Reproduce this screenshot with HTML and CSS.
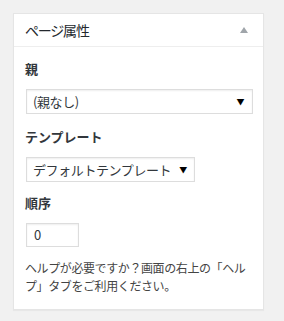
FILE: index.html
```html
<!DOCTYPE html>
<html lang="ja">
<head>
  <meta charset="UTF-8" />
  <title>ページ属性</title>
  <link rel="stylesheet" href="styles.css">
</head>
<body>
  <div class="postbox">
    <div class="postbox-header">
      <h2>ページ属性</h2>
      <span class="toggle-indicator"></span>
    </div>
    <div class="inside">
      <p class="attr-label">親</p>
      <div class="select-box wide">
        <span>(親なし)</span>
        <span class="arrow">▼</span>
      </div>

      <p class="attr-label">テンプレート</p>
      <div class="select-box">
        <span>デフォルトテンプレート</span>
        <span class="arrow">▼</span>
      </div>

      <p class="attr-label order-label">順序</p>
      <div class="order-input">0</div>

      <p class="help">ヘルプが必要ですか？画面の右上の「ヘルプ」タブをご利用ください。</p>
    </div>
  </div>
</body>
</html>
```

FILE: styles.css
```css
* {
  box-sizing: border-box;
}

body {
  margin: 0;
  padding: 13px 20px 12px 13px;
  background: #f1f1f1;
  color: #444;
  font-family: "Noto Sans CJK JP", "Noto Sans", sans-serif;
  font-size: 13px;
  line-height: 18px;
}

.postbox {
  background: #fff;
  border: 1px solid #e5e5e5;
  box-shadow: 0 1px 1px rgba(0, 0, 0, 0.04);
  height: 297px;
}

.postbox-header {
  display: flex;
  align-items: center;
  justify-content: space-between;
  height: 33px;
  padding: 0 12px 0 11px;
  border-bottom: 1px solid #eee;
}

.postbox-header h2 {
  margin: 0;
  font-size: 14px;
  font-weight: 400;
  letter-spacing: -1.2px;
  color: #23282d;
}

.toggle-indicator {
  width: 0;
  height: 0;
  border-left: 4px solid transparent;
  border-right: 4px solid transparent;
  border-bottom: 6px solid #a0a5aa;
  margin-right: 3px;
}

.inside {
  padding: 0 11px 12px 12px;
}

.attr-label {
  margin: 13px 0 11px -1px;
  font-weight: 600;
  color: #32373c;
}

.select-box {
  display: inline-flex;
  align-items: center;
  justify-content: space-between;
  gap: 8px;
  height: 25px;
  padding: 0 7px 0 6px;
  border: 1px solid #ddd;
  box-shadow: inset 0 1px 2px rgba(0, 0, 0, 0.07);
  color: #32373c;
  letter-spacing: -0.4px;
}

.select-box.wide {
  display: flex;
  width: 227px;
  padding-right: 8px;
}

.arrow {
  font-size: 8px;
  color: #000;
}

.select-box + .attr-label {
  margin-top: 14px;
}

.select-box + .order-label {
  margin-top: 12px;
}

.order-input {
  width: 53px;
  height: 24px;
  padding: 0 7px;
  border: 1px solid #ddd;
  box-shadow: inset 0 1px 2px rgba(0, 0, 0, 0.07);
  line-height: 22px;
  color: #32373c;
}

.help {
  margin: 12px 0 0 -1px;
  font-size: 12px;
  letter-spacing: -0.4px;
}
```
